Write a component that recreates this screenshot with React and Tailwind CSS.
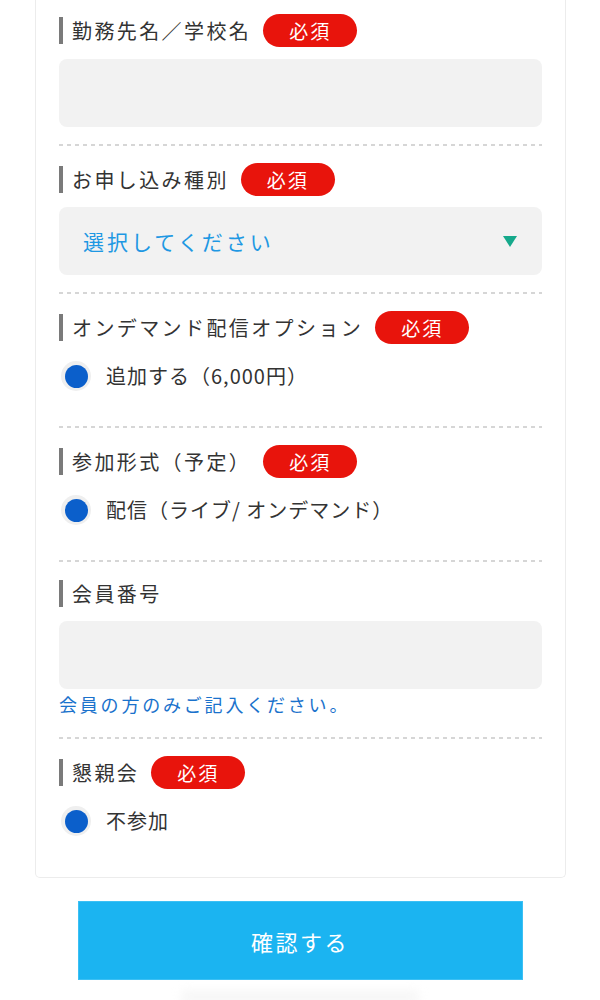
import React from "react";

const FONT = { fontFamily: '"Noto Sans CJK JP", "Noto Sans", sans-serif' };

function Dash() {
  return (
    <div className="h-[2px] w-full bg-[repeating-linear-gradient(to_right,#d6d6d6_0px,#d6d6d6_4px,transparent_4px,transparent_8px)]" />
  );
}

function Label({ text, required }) {
  return (
    <div className="flex items-center h-[33px]">
      <div className="w-[4px] h-[27px] bg-[#7a7a7a]" />
      <span className="ml-[9px] text-[20px] leading-none tracking-[2.4px] text-[#333333]">{text}</span>
      {required && (
        <span className="ml-[12px] flex items-center justify-center w-[94px] h-[33px] rounded-full bg-[#e8140c] text-white text-[19px] leading-none tracking-[2px]">
          必須
        </span>
      )}
    </div>
  );
}

function Radio({ text }) {
  return (
    <div className="flex items-center h-[30px]">
      <div className="ml-[2px] w-[30px] h-[30px] rounded-full bg-[#efefef] flex items-center justify-center">
        <div className="w-[23px] h-[23px] rounded-full bg-[#0b5fcb]" />
      </div>
      <span className="ml-[15px] text-[20px] leading-none tracking-[1px] text-[#333333]">{text}</span>
    </div>
  );
}

export default function App() {
  return (
    <div className="bg-white w-[600px] h-[1000px] overflow-hidden" style={FONT}>
      <div className="ml-[35px] w-[531px] border-x border-b border-[#ececec] rounded-b-[5px] px-[23px]">
        {/* Section 1 */}
        <div className="pt-[14px]">
          <Label text="勤務先名／学校名" required />
          <div className="mt-[12px] h-[68px] rounded-[8px] bg-[#f2f2f2]" />
          <div className="mt-[17px]"><Dash /></div>
        </div>
        {/* Section 2 */}
        <div className="pt-[17px]">
          <Label text="お申し込み種別" required />
          <div className="mt-[11px] h-[68px] rounded-[8px] bg-[#f2f2f2] flex items-center justify-between pl-[24px] pr-[25px]">
            <span className="text-[21px] leading-none tracking-[3px] text-[#1e98e3]">選択してください</span>
            <svg width="14" height="11" viewBox="0 0 14 11">
              <polygon points="0,0 14,0 7,11" fill="#16a98b" />
            </svg>
          </div>
          <div className="mt-[17px]"><Dash /></div>
        </div>
        {/* Section 3 */}
        <div className="pt-[17px]">
          <Label text="オンデマンド配信オプション" required />
          <div className="mt-[17px]"><Radio text="追加する（6,000円）" /></div>
          <div className="mt-[35px]"><Dash /></div>
        </div>
        {/* Section 4 */}
        <div className="pt-[17px]">
          <Label text="参加形式（予定）" required />
          <div className="mt-[17px]"><Radio text="配信（ライブ/ オンデマンド）" /></div>
          <div className="mt-[35px]"><Dash /></div>
        </div>
        {/* Section 5 */}
        <div className="pt-[15px]">
          <Label text="会員番号" />
          <div className="mt-[11px] h-[68px] rounded-[8px] bg-[#f2f2f2]" />
          <div className="mt-[4px] h-[22px] flex items-center text-[18px] leading-none tracking-[2.8px] text-[#1a72cc]">
            会員の方のみご記入ください。
          </div>
          <div className="mt-[22px]"><Dash /></div>
        </div>
        {/* Section 6 */}
        <div className="pt-[17px] pb-[41px]">
          <Label text="懇親会" required />
          <div className="mt-[17px]"><Radio text="不参加" /></div>
        </div>
      </div>
      <div className="mt-[23px] flex justify-center">
        <button className="w-[445px] h-[79px] bg-[#1bb4f1] border border-[#3cc0f4] text-white text-[22px] tracking-[2.5px] leading-none">
          確認する
        </button>
      </div>
      <div className="mt-[10px] mx-auto w-[240px] h-[14px] rounded-full bg-[#f7f7f7] blur-[4px]" />
    </div>
  );
}
